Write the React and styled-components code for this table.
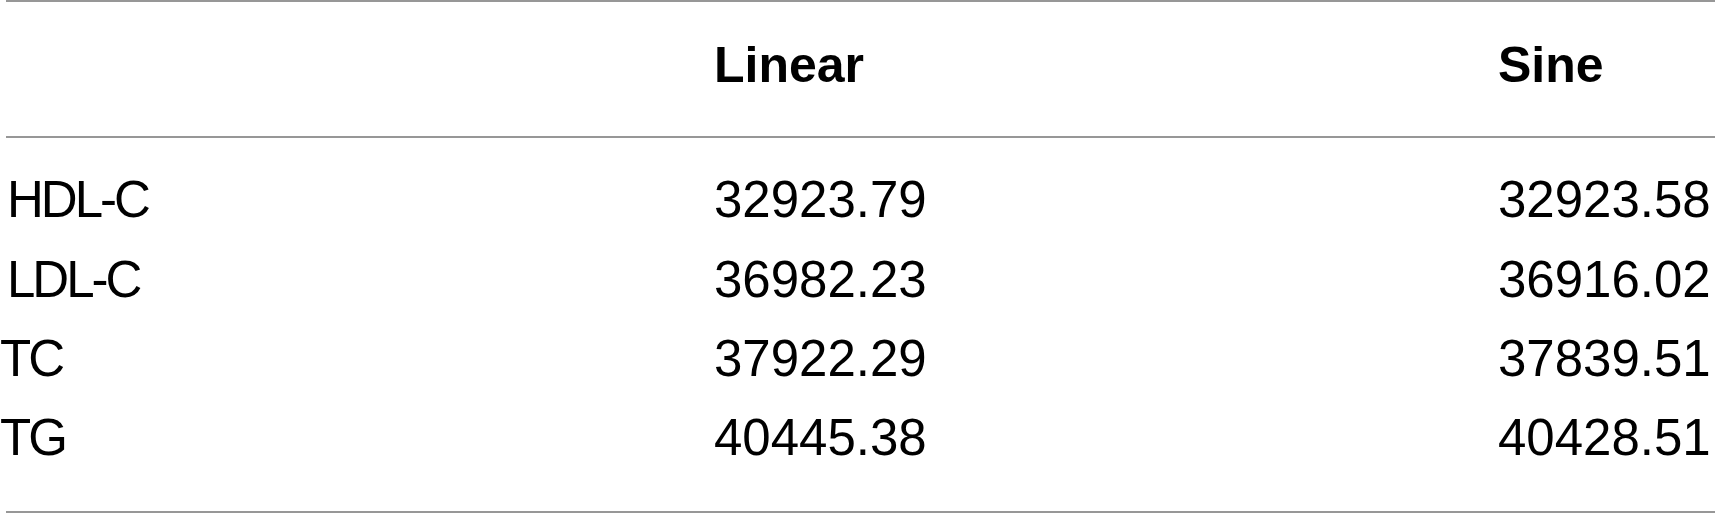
import React from 'react';
import styled, { createGlobalStyle } from 'styled-components';

const GlobalStyle = createGlobalStyle`
  body {
    margin: 0;
    background: #ffffff;
    color: #000000;
    font-family: "Liberation Sans", Arial, sans-serif;
  }
`;

const Table = styled.div`
  display: flex;
  flex-direction: column;
  width: 1715px;
`;

const Rule = styled.div`
  height: 2px;
  margin-left: 6px;
  background: #979797;
`;

const Row = styled.div`
  display: grid;
  grid-template-columns: 714px 784px 1fr;
`;

const Head = styled(Row)`
  padding: 23.5px 0 31.5px;
`;

const Body = styled(Row)`
  padding: 22.4px 0 33.4px;
`;

const HeadCell = styled.div`
  font-size: 50px;
  font-weight: 700;
  line-height: 79px;
  white-space: nowrap;
`;

const Cell = styled.div`
  font-size: 51px;
  line-height: 79.3px;
  white-space: nowrap;
  padding-left: ${({ $indent }) => ($indent ? '7px' : '0')};
`;

// row labels are set tighter than the numbers
const Label = styled(Cell)`
  letter-spacing: -3px;
`;

const rows = [
  { name: 'HDL-C', linear: '32923.79', sine: '32923.58', indent: true },
  { name: 'LDL-C', linear: '36982.23', sine: '36916.02', indent: true },
  { name: 'TC', linear: '37922.29', sine: '37839.51' },
  { name: 'TG', linear: '40445.38', sine: '40428.51' },
];

export default function App() {
  return (
    <>
      <GlobalStyle />
      <Table>
        <Rule />
        <Head>
          <HeadCell />
          <HeadCell>Linear</HeadCell>
          <HeadCell>Sine</HeadCell>
        </Head>
        <Rule />
        <Body>
          {rows.map((r) => (
            <React.Fragment key={r.name}>
              <Label $indent={r.indent}>{r.name}</Label>
              <Cell>{r.linear}</Cell>
              <Cell>{r.sine}</Cell>
            </React.Fragment>
          ))}
        </Body>
        <Rule />
      </Table>
    </>
  );
}
